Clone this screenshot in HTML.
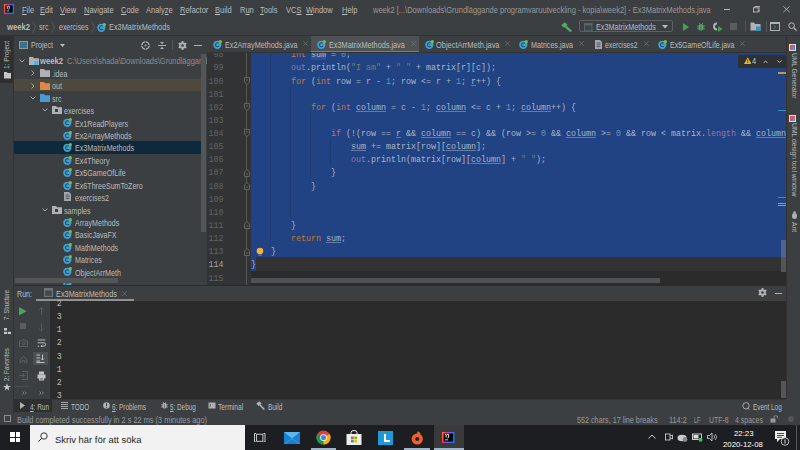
<!DOCTYPE html>
<html><head><meta charset="utf-8"><style>
html,body{margin:0;padding:0;width:800px;height:450px;overflow:hidden;background:#3c3f41}
body{position:relative}
body>div,body>svg{position:absolute;white-space:pre}
</style></head><body>
<div style="left:0px;top:0px;width:800px;height:450px;background:#3c3f41;"></div>
<div style="left:0px;top:0px;width:800px;height:17px;background:#3c3f41;"></div>
<div style="left:0px;top:17px;width:800px;height:18.5px;background:#3c3f41;"></div>
<div style="left:0px;top:35px;width:800px;height:1px;background:#323232;"></div>
<svg style="left:4.4px;top:3.6px" width="10" height="10" viewBox="0 0 10 10"><defs><linearGradient id="ijg" x1="0" y1="0" x2="1" y2="0.3"><stop offset="0" stop-color="#fe7d30"/><stop offset="0.3" stop-color="#fe315d"/><stop offset="0.65" stop-color="#6b57f7"/><stop offset="1" stop-color="#087cfa"/></linearGradient></defs><rect width="10" height="10" fill="url(#ijg)"/><rect x="1.4" y="1.3" width="7.3" height="7.3" fill="#000"/><path d="M2.5 2.2H3.3V5M4 2.2H5.3V4.6Q5.3 5.3 4.4 5.3" stroke="#fff" stroke-width="0.8" fill="none"/><rect x="2.5" y="6.6" width="2.6" height="0.7" fill="#fff"/></svg>
<div style="left:22px;top:6.86px;font-size:8.2px;line-height:8.2px;color:#bbbbbb;font-weight:normal;font-family:'Liberation Sans',sans-serif;transform-origin:0 0;transform:scaleX(0.915);"><span style="text-decoration:underline;text-decoration-thickness:0.7px;text-underline-offset:1px">F</span>ile</div>
<div style="left:40px;top:6.86px;font-size:8.2px;line-height:8.2px;color:#bbbbbb;font-weight:normal;font-family:'Liberation Sans',sans-serif;transform-origin:0 0;transform:scaleX(0.915);"><span style="text-decoration:underline;text-decoration-thickness:0.7px;text-underline-offset:1px">E</span>dit</div>
<div style="left:60px;top:6.86px;font-size:8.2px;line-height:8.2px;color:#bbbbbb;font-weight:normal;font-family:'Liberation Sans',sans-serif;transform-origin:0 0;transform:scaleX(0.915);"><span style="text-decoration:underline;text-decoration-thickness:0.7px;text-underline-offset:1px">V</span>iew</div>
<div style="left:84px;top:6.86px;font-size:8.2px;line-height:8.2px;color:#bbbbbb;font-weight:normal;font-family:'Liberation Sans',sans-serif;transform-origin:0 0;transform:scaleX(0.915);"><span style="text-decoration:underline;text-decoration-thickness:0.7px;text-underline-offset:1px">N</span>avigate</div>
<div style="left:121px;top:6.86px;font-size:8.2px;line-height:8.2px;color:#bbbbbb;font-weight:normal;font-family:'Liberation Sans',sans-serif;transform-origin:0 0;transform:scaleX(0.915);"><span style="text-decoration:underline;text-decoration-thickness:0.7px;text-underline-offset:1px">C</span>ode</div>
<div style="left:146px;top:6.86px;font-size:8.2px;line-height:8.2px;color:#bbbbbb;font-weight:normal;font-family:'Liberation Sans',sans-serif;transform-origin:0 0;transform:scaleX(0.915);">Analy<span style="text-decoration:underline;text-decoration-thickness:0.7px;text-underline-offset:1px">z</span>e</div>
<div style="left:179.5px;top:6.86px;font-size:8.2px;line-height:8.2px;color:#bbbbbb;font-weight:normal;font-family:'Liberation Sans',sans-serif;transform-origin:0 0;transform:scaleX(0.915);"><span style="text-decoration:underline;text-decoration-thickness:0.7px;text-underline-offset:1px">R</span>efactor</div>
<div style="left:215px;top:6.86px;font-size:8.2px;line-height:8.2px;color:#bbbbbb;font-weight:normal;font-family:'Liberation Sans',sans-serif;transform-origin:0 0;transform:scaleX(0.915);"><span style="text-decoration:underline;text-decoration-thickness:0.7px;text-underline-offset:1px">B</span>uild</div>
<div style="left:240px;top:6.86px;font-size:8.2px;line-height:8.2px;color:#bbbbbb;font-weight:normal;font-family:'Liberation Sans',sans-serif;transform-origin:0 0;transform:scaleX(0.915);">R<span style="text-decoration:underline;text-decoration-thickness:0.7px;text-underline-offset:1px">u</span>n</div>
<div style="left:260px;top:6.86px;font-size:8.2px;line-height:8.2px;color:#bbbbbb;font-weight:normal;font-family:'Liberation Sans',sans-serif;transform-origin:0 0;transform:scaleX(0.915);"><span style="text-decoration:underline;text-decoration-thickness:0.7px;text-underline-offset:1px">T</span>ools</div>
<div style="left:286px;top:6.86px;font-size:8.2px;line-height:8.2px;color:#bbbbbb;font-weight:normal;font-family:'Liberation Sans',sans-serif;transform-origin:0 0;transform:scaleX(0.915);">VC<span style="text-decoration:underline;text-decoration-thickness:0.7px;text-underline-offset:1px">S</span></div>
<div style="left:306px;top:6.86px;font-size:8.2px;line-height:8.2px;color:#bbbbbb;font-weight:normal;font-family:'Liberation Sans',sans-serif;transform-origin:0 0;transform:scaleX(0.915);"><span style="text-decoration:underline;text-decoration-thickness:0.7px;text-underline-offset:1px">W</span>indow</div>
<div style="left:342px;top:6.86px;font-size:8.2px;line-height:8.2px;color:#bbbbbb;font-weight:normal;font-family:'Liberation Sans',sans-serif;transform-origin:0 0;transform:scaleX(0.915);"><span style="text-decoration:underline;text-decoration-thickness:0.7px;text-underline-offset:1px">H</span>elp</div>
<div style="left:372.5px;top:6.86px;font-size:8.2px;line-height:8.2px;color:#999999;font-weight:normal;font-family:'Liberation Sans',sans-serif;transform-origin:0 0;transform:scaleX(0.915);">week2 [...\Downloads\Grundläggande programvaruutveckling - kopia\week2] - Ex3MatrixMethods.java</div>
<div style="left:723.5px;top:8.8px;width:6.5px;height:0.9px;background:#bbbbbb;"></div>
<svg style="left:752.5px;top:6px" width="7.5" height="6.5" viewBox="0 0 7.5 6.5"><rect x="0.5" y="1.8" width="4.7" height="4.2" fill="none" stroke="#bbbbbb" stroke-width="0.9"/><path d="M1.8 1.8V0.5H7V5H5.2" fill="none" stroke="#bbbbbb" stroke-width="0.9"/></svg>
<svg style="left:782.5px;top:6px" width="7" height="6.5" viewBox="0 0 7 6.5"><path d="M0.3 0.3L6.7 6.2M6.7 0.3L0.3 6.2" stroke="#bbbbbb" stroke-width="0.8"/></svg>
<div style="left:7px;top:23.86px;font-size:8.2px;line-height:8.2px;color:#bbbbbb;font-weight:bold;font-family:'Liberation Sans',sans-serif;transform-origin:0 0;transform:scaleX(0.9352);">week2</div>
<svg style="left:32px;top:21px" width="4" height="12" viewBox="0 0 4 12"><path d="M0.5 0.5L3.5 6L0.5 11.5" stroke="#5e6060" stroke-width="0.8" fill="none"/></svg>
<div style="left:39px;top:24.06px;font-size:8.2px;line-height:8.2px;color:#bbbbbb;font-weight:normal;font-family:'Liberation Sans',sans-serif;transform-origin:0 0;transform:scaleX(0.8698);">src</div>
<svg style="left:51px;top:21px" width="4" height="12" viewBox="0 0 4 12"><path d="M0.5 0.5L3.5 6L0.5 11.5" stroke="#5e6060" stroke-width="0.8" fill="none"/></svg>
<div style="left:59px;top:24.06px;font-size:8.2px;line-height:8.2px;color:#bbbbbb;font-weight:normal;font-family:'Liberation Sans',sans-serif;transform-origin:0 0;transform:scaleX(0.8528);">exercises</div>
<svg style="left:91px;top:21px" width="4" height="12" viewBox="0 0 4 12"><path d="M0.5 0.5L3.5 6L0.5 11.5" stroke="#5e6060" stroke-width="0.8" fill="none"/></svg>
<svg style="left:97px;top:22.5px" width="9" height="9" viewBox="0 0 10 10"><circle cx="4.8" cy="5.3" r="4.6" fill="#44a0cf"/><path d="M6.6 3.8A2.2 2.2 0 1 0 6.6 6.8" stroke="#1d4f6b" stroke-width="1.2" fill="none"/><circle cx="8.1" cy="1.9" r="1.9" fill="#6cc04a"/></svg>
<div style="left:108.5px;top:24.06px;font-size:8.2px;line-height:8.2px;color:#bbbbbb;font-weight:normal;font-family:'Liberation Sans',sans-serif;transform-origin:0 0;transform:scaleX(0.8995);">Ex3MatrixMethods</div>
<svg style="left:561px;top:22px" width="11" height="10" viewBox="0 0 11 10"><path d="M0.3 3.2L3.8 0.3L6.6 2.8L3.2 5.8Z" fill="#59a869"/><path d="M4.6 4.4L10.2 9.6" stroke="#59a869" stroke-width="2.2"/></svg>
<div style="left:578.5px;top:20px;width:94px;height:12px;border:1px solid #5e6060;border-radius:2px;box-sizing:border-box;background:#3c3f41"></div>
<svg style="left:584px;top:22.5px" width="8.5" height="8.5" viewBox="0 0 9 9"><rect x="0" y="0" width="9" height="9" fill="#59656b"/><rect x="1.2" y="2.6" width="6.6" height="5.2" fill="#3d4548"/></svg>
<div style="left:596.4px;top:24.06px;font-size:8.2px;line-height:8.2px;color:#bbbbbb;font-weight:normal;font-family:'Liberation Sans',sans-serif;transform-origin:0 0;transform:scaleX(0.8848);">Ex3MatrixMethods</div>
<svg style="left:662px;top:24.5px" width="6" height="4" viewBox="0 0 6 4"><path d="M0 0L6 0L3 3.5Z" fill="#bbbbbb"/></svg>
<svg style="left:682.5px;top:22.5px" width="6" height="8" viewBox="0 0 6 8"><path d="M0 0L6 4L0 8Z" fill="#499c54"/></svg>
<svg style="left:697px;top:22.3px" width="8" height="9" viewBox="0 0 8 9"><path d="M2.2 1L3 2.3M5.8 1L5 2.3" stroke="#59a869" stroke-width="0.8"/><rect x="1.5" y="2.2" width="5" height="6.3" rx="2" fill="#59a869"/><path d="M0 4.2H1.5M6.5 4.2H8M0 6.8H1.5M6.5 6.8H8" stroke="#59a869" stroke-width="0.8"/><path d="M4 3.5V8" stroke="#3c3f41" stroke-width="0.6"/></svg>
<svg style="left:713px;top:21.5px" width="10" height="10" viewBox="0 0 10 10"><path d="M4 0.5A4 4 0 1 0 4 8.5L4 6.5A2 2 0 1 1 4 2.5Z" fill="#afb1b3"/><path d="M5 4L9.5 7L5 10Z" fill="#499c54"/></svg>
<div style="left:730px;top:23px;width:7px;height:7px;background:#5a5d5f;"></div>
<div style="left:745px;top:21px;width:0.8px;height:11px;background:#515658;"></div>
<svg style="left:750px;top:22px" width="11" height="9" viewBox="0 0 11 9"><path d="M0.5 0.5H4L5 2H10.5V8.5H0.5Z" fill="#afb1b3"/><rect x="6" y="4.5" width="4.5" height="4.5" fill="#3592c4"/></svg>
<div style="left:766px;top:21px;width:0.8px;height:11px;background:#515658;"></div>
<div style="left:770px;top:22px;width:10px;height:9px;border:1px solid #afb1b3;box-sizing:border-box;border-top-width:2px"></div>
<svg style="left:773px;top:25px" width="4" height="4" viewBox="0 0 4 4"><path d="M0.5 0.5L2.5 2L0.5 3.5" stroke="#499c54" stroke-width="0.8" fill="none"/></svg>
<svg style="left:788px;top:22px" width="9" height="9" viewBox="0 0 9 9"><circle cx="3.6" cy="3.6" r="2.8" stroke="#bbbbbb" stroke-width="1" fill="none"/><path d="M5.6 5.6L8.5 8.5" stroke="#bbbbbb" stroke-width="1.2"/></svg>
<div style="left:0px;top:36px;width:13px;height:377px;background:#3c3f41;"></div>
<div style="left:0px;top:36px;width:13px;height:47px;background:#2d2f31;"></div>
<div style="left:13px;top:36px;width:0.8px;height:377px;background:#323232;"></div>
<div style="left:3px;top:69px;transform-origin:0 0;transform:rotate(-90deg) scaleX(0.8836);font-size:7.5px;line-height:7.5px;color:#bbbbbb;font-family:'Liberation Sans',sans-serif">1: Project</div>
<svg style="left:4px;top:72px" width="7" height="6.5" viewBox="0 0 7 6.5"><path d="M0 0H2.8L3.6 1H7V6.5H0Z" fill="#c4c6c8"/></svg>
<div style="left:3px;top:320px;transform-origin:0 0;transform:rotate(-90deg) scaleX(0.7736);font-size:7.5px;line-height:7.5px;color:#bbbbbb;font-family:'Liberation Sans',sans-serif">7: Structure</div>
<svg style="left:4px;top:327.5px" width="7" height="6.5" viewBox="0 0 7 6.5"><rect x="0" y="0" width="3" height="2.5" fill="#c4c6c8"/><rect x="0" y="3.8" width="3" height="2.7" fill="#c4c6c8"/><rect x="3.8" y="3.8" width="3.2" height="2.7" fill="#c4c6c8"/></svg>
<div style="left:3px;top:380.5px;transform-origin:0 0;transform:rotate(-90deg) scaleX(0.8421);font-size:7.5px;line-height:7.5px;color:#bbbbbb;font-family:'Liberation Sans',sans-serif">2: Favorites</div>
<svg style="left:3px;top:383px" width="8" height="8" viewBox="0 0 10 10"><path d="M5 0.3L6.2 3.7H9.8L6.9 5.9L8 9.5L5 7.3L2 9.5L3.1 5.9L0.2 3.7H3.8Z" fill="#c4c6c8"/></svg>
<div style="left:13.8px;top:36px;width:193px;height:249px;background:#3c3f41;"></div>
<div style="left:19px;top:41px;width:9px;height:8px;background:#3a7190;border:1.3px solid #8d999e;box-sizing:border-box"></div>
<div style="left:31px;top:42.36px;font-size:8.2px;line-height:8.2px;color:#bbbbbb;font-weight:normal;font-family:'Liberation Sans',sans-serif;transform-origin:0 0;transform:scaleX(0.8633);">Project</div>
<svg style="left:60px;top:44px" width="5" height="3.5" viewBox="0 0 6 4"><path d="M0 0L6 0L3 3.5Z" fill="#bbbbbb"/></svg>
<svg style="left:140.5px;top:40.5px" width="9" height="9" viewBox="0 0 9 9"><circle cx="4.5" cy="4.5" r="3.6" stroke="#afb1b3" stroke-width="1.4" fill="none"/><path d="M4.5 0.5V3M4.5 6V8.5M0.5 4.5H3M6 4.5H8.5" stroke="#3c3f41" stroke-width="0.9"/><circle cx="4.5" cy="4.5" r="0.9" fill="#afb1b3"/></svg>
<svg style="left:157.5px;top:40.5px" width="8" height="9" viewBox="0 0 8 9"><path d="M0 4.5H8" stroke="#afb1b3" stroke-width="1"/><path d="M2 1H6L4 3.2Z M2 8H6L4 5.8Z" fill="#afb1b3"/></svg>
<div style="left:171.5px;top:40px;width:0.8px;height:10px;background:#515658;"></div>
<svg style="left:177.5px;top:40.5px" width="9" height="9" viewBox="0 0 9 9"><polygon points="3.61,1.63 3.61,0.09 5.39,0.09 5.39,1.63 6.54,2.30 7.87,1.52 8.77,3.07 7.43,3.83 7.43,5.17 8.77,5.93 7.87,7.48 6.54,6.70 5.39,7.37 5.39,8.91 3.61,8.91 3.61,7.37 2.46,6.70 1.13,7.48 0.23,5.93 1.57,5.17 1.57,3.83 0.23,3.07 1.13,1.52 2.46,2.30" fill="#afb1b3"/><circle cx="4.5" cy="4.5" r="3.2" fill="#afb1b3"/><circle cx="4.5" cy="4.5" r="1.3" fill="#3c3f41"/></svg>
<div style="left:194px;top:44.5px;width:8px;height:1px;background:#afb1b3;"></div>
<div style="left:13.8px;top:78.5px;width:187px;height:12.4px;background:#4d493d;"></div>
<div style="left:13.8px;top:141.2px;width:187px;height:12.4px;background:#0d293e;"></div>
<svg style="left:18.5px;top:58.8px" width="6" height="4" viewBox="0 0 6 4"><path d="M0.5 0.5L3 3L5.5 0.5" stroke="#afb1b3" stroke-width="0.9" fill="none"/></svg>
<svg style="left:28.7px;top:56.8px" width="10" height="8" viewBox="0 0 10 8"><path d="M0 0H4L5 1.2H10V8H0Z" fill="#afb1b3"/></svg>
<div style="left:33.7px;top:61.3px;width:4px;height:4px;background:#40b6e0;"></div>
<div style="left:40.3px;top:58.46px;font-size:8.2px;line-height:8.2px;color:#bbbbbb;font-weight:bold;font-family:'Liberation Sans',sans-serif;transform-origin:0 0;transform:scaleX(0.9352);">week2</div>
<svg style="left:31.0px;top:70.22px" width="4" height="6" viewBox="0 0 4 6"><path d="M0.5 0.5L3 3L0.5 5.5" stroke="#afb1b3" stroke-width="0.9" fill="none"/></svg>
<svg style="left:40.2px;top:69.22px" width="10" height="8" viewBox="0 0 10 8"><path d="M0 0H4L5 1.2H10V8H0Z" fill="#afb1b3"/></svg>
<div style="left:52px;top:70.88px;font-size:8.2px;line-height:8.2px;color:#bbbbbb;font-weight:normal;font-family:'Liberation Sans',sans-serif;transform-origin:0 0;transform:scaleX(0.87);">.idea</div>
<svg style="left:31.0px;top:82.64px" width="4" height="6" viewBox="0 0 4 6"><path d="M0.5 0.5L3 3L0.5 5.5" stroke="#afb1b3" stroke-width="0.9" fill="none"/></svg>
<svg style="left:40.2px;top:81.64px" width="10" height="8" viewBox="0 0 10 8"><path d="M0 0H4L5 1.2H10V8H0Z" fill="#e08646"/></svg>
<div style="left:52px;top:83.30px;font-size:8.2px;line-height:8.2px;color:#bbbbbb;font-weight:normal;font-family:'Liberation Sans',sans-serif;transform-origin:0 0;transform:scaleX(0.87);">out</div>
<svg style="left:30.0px;top:96.06px" width="6" height="4" viewBox="0 0 6 4"><path d="M0.5 0.5L3 3L5.5 0.5" stroke="#afb1b3" stroke-width="0.9" fill="none"/></svg>
<svg style="left:40.2px;top:94.06px" width="10" height="8" viewBox="0 0 10 8"><path d="M0 0H4L5 1.2H10V8H0Z" fill="#4b9ad0"/></svg>
<div style="left:52px;top:95.72px;font-size:8.2px;line-height:8.2px;color:#bbbbbb;font-weight:normal;font-family:'Liberation Sans',sans-serif;transform-origin:0 0;transform:scaleX(0.87);">src</div>
<svg style="left:41.5px;top:108.47999999999999px" width="6" height="4" viewBox="0 0 6 4"><path d="M0.5 0.5L3 3L5.5 0.5" stroke="#afb1b3" stroke-width="0.9" fill="none"/></svg>
<svg style="left:51.7px;top:106.47999999999999px" width="10" height="8" viewBox="0 0 10 8"><path d="M0 0H4L5 1.2H10V8H0Z" fill="#afb1b3"/></svg>
<div style="left:55.2px;top:109.47999999999999px;width:3px;height:3px;background:#3c3f41;"></div>
<div style="left:63.6px;top:108.14px;font-size:8.2px;line-height:8.2px;color:#bbbbbb;font-weight:normal;font-family:'Liberation Sans',sans-serif;transform-origin:0 0;transform:scaleX(0.87);">exercises</div>
<svg style="left:63.2px;top:118.4px" width="9" height="9" viewBox="0 0 10 10"><circle cx="4.8" cy="5.3" r="4.6" fill="#44a0cf"/><path d="M6.6 3.8A2.2 2.2 0 1 0 6.6 6.8" stroke="#1d4f6b" stroke-width="1.2" fill="none"/><circle cx="8.1" cy="1.9" r="1.9" fill="#6cc04a"/></svg>
<div style="left:74.5px;top:120.56px;font-size:8.2px;line-height:8.2px;color:#bbbbbb;font-weight:normal;font-family:'Liberation Sans',sans-serif;transform-origin:0 0;transform:scaleX(0.87);">Ex1ReadPlayers</div>
<svg style="left:63.2px;top:130.82px" width="9" height="9" viewBox="0 0 10 10"><circle cx="4.8" cy="5.3" r="4.6" fill="#44a0cf"/><path d="M6.6 3.8A2.2 2.2 0 1 0 6.6 6.8" stroke="#1d4f6b" stroke-width="1.2" fill="none"/><circle cx="8.1" cy="1.9" r="1.9" fill="#6cc04a"/></svg>
<div style="left:74.5px;top:132.98px;font-size:8.2px;line-height:8.2px;color:#bbbbbb;font-weight:normal;font-family:'Liberation Sans',sans-serif;transform-origin:0 0;transform:scaleX(0.87);">Ex2ArrayMethods</div>
<svg style="left:63.2px;top:143.24px" width="9" height="9" viewBox="0 0 10 10"><circle cx="4.8" cy="5.3" r="4.6" fill="#44a0cf"/><path d="M6.6 3.8A2.2 2.2 0 1 0 6.6 6.8" stroke="#1d4f6b" stroke-width="1.2" fill="none"/><circle cx="8.1" cy="1.9" r="1.9" fill="#6cc04a"/></svg>
<div style="left:74.5px;top:145.40px;font-size:8.2px;line-height:8.2px;color:#bbbbbb;font-weight:normal;font-family:'Liberation Sans',sans-serif;transform-origin:0 0;transform:scaleX(0.87);">Ex3MatrixMethods</div>
<svg style="left:63.2px;top:155.66px" width="9" height="9" viewBox="0 0 10 10"><circle cx="4.8" cy="5.3" r="4.6" fill="#44a0cf"/><path d="M6.6 3.8A2.2 2.2 0 1 0 6.6 6.8" stroke="#1d4f6b" stroke-width="1.2" fill="none"/><circle cx="8.1" cy="1.9" r="1.9" fill="#6cc04a"/></svg>
<div style="left:74.5px;top:157.82px;font-size:8.2px;line-height:8.2px;color:#bbbbbb;font-weight:normal;font-family:'Liberation Sans',sans-serif;transform-origin:0 0;transform:scaleX(0.87);">Ex4Theory</div>
<svg style="left:63.2px;top:168.07999999999998px" width="9" height="9" viewBox="0 0 10 10"><circle cx="4.8" cy="5.3" r="4.6" fill="#44a0cf"/><path d="M6.6 3.8A2.2 2.2 0 1 0 6.6 6.8" stroke="#1d4f6b" stroke-width="1.2" fill="none"/><circle cx="8.1" cy="1.9" r="1.9" fill="#6cc04a"/></svg>
<div style="left:74.5px;top:170.24px;font-size:8.2px;line-height:8.2px;color:#bbbbbb;font-weight:normal;font-family:'Liberation Sans',sans-serif;transform-origin:0 0;transform:scaleX(0.87);">Ex5GameOfLife</div>
<svg style="left:63.2px;top:180.5px" width="9" height="9" viewBox="0 0 10 10"><circle cx="4.8" cy="5.3" r="4.6" fill="#44a0cf"/><path d="M6.6 3.8A2.2 2.2 0 1 0 6.6 6.8" stroke="#1d4f6b" stroke-width="1.2" fill="none"/><circle cx="8.1" cy="1.9" r="1.9" fill="#6cc04a"/></svg>
<div style="left:74.5px;top:182.66px;font-size:8.2px;line-height:8.2px;color:#bbbbbb;font-weight:normal;font-family:'Liberation Sans',sans-serif;transform-origin:0 0;transform:scaleX(0.87);">Ex6ThreeSumToZero</div>
<svg style="left:64.2px;top:192.42000000000002px" width="7" height="9" viewBox="0 0 7 9"><path d="M0 0H5L7 2V9H0Z" fill="#9ea7ad"/><path d="M1.5 3H5.5M1.5 4.8H5.5M1.5 6.6H5.5" stroke="#3c3f41" stroke-width="0.7"/></svg>
<div style="left:74.5px;top:195.08px;font-size:8.2px;line-height:8.2px;color:#bbbbbb;font-weight:normal;font-family:'Liberation Sans',sans-serif;transform-origin:0 0;transform:scaleX(0.87);">exercises2</div>
<svg style="left:41.5px;top:207.83999999999997px" width="6" height="4" viewBox="0 0 6 4"><path d="M0.5 0.5L3 3L5.5 0.5" stroke="#afb1b3" stroke-width="0.9" fill="none"/></svg>
<svg style="left:51.7px;top:205.83999999999997px" width="10" height="8" viewBox="0 0 10 8"><path d="M0 0H4L5 1.2H10V8H0Z" fill="#afb1b3"/></svg>
<div style="left:55.2px;top:208.83999999999997px;width:3px;height:3px;background:#3c3f41;"></div>
<div style="left:63.6px;top:207.50px;font-size:8.2px;line-height:8.2px;color:#bbbbbb;font-weight:normal;font-family:'Liberation Sans',sans-serif;transform-origin:0 0;transform:scaleX(0.87);">samples</div>
<svg style="left:63.2px;top:217.76px" width="9" height="9" viewBox="0 0 10 10"><circle cx="4.8" cy="5.3" r="4.6" fill="#44a0cf"/><path d="M6.6 3.8A2.2 2.2 0 1 0 6.6 6.8" stroke="#1d4f6b" stroke-width="1.2" fill="none"/><circle cx="8.1" cy="1.9" r="1.9" fill="#6cc04a"/></svg>
<div style="left:74.5px;top:219.92px;font-size:8.2px;line-height:8.2px;color:#bbbbbb;font-weight:normal;font-family:'Liberation Sans',sans-serif;transform-origin:0 0;transform:scaleX(0.87);">ArrayMethods</div>
<svg style="left:63.2px;top:230.18px" width="9" height="9" viewBox="0 0 10 10"><circle cx="4.8" cy="5.3" r="4.6" fill="#44a0cf"/><path d="M6.6 3.8A2.2 2.2 0 1 0 6.6 6.8" stroke="#1d4f6b" stroke-width="1.2" fill="none"/><circle cx="8.1" cy="1.9" r="1.9" fill="#6cc04a"/></svg>
<div style="left:74.5px;top:232.34px;font-size:8.2px;line-height:8.2px;color:#bbbbbb;font-weight:normal;font-family:'Liberation Sans',sans-serif;transform-origin:0 0;transform:scaleX(0.87);">BasicJavaFX</div>
<svg style="left:63.2px;top:242.60000000000002px" width="9" height="9" viewBox="0 0 10 10"><circle cx="4.8" cy="5.3" r="4.6" fill="#44a0cf"/><path d="M6.6 3.8A2.2 2.2 0 1 0 6.6 6.8" stroke="#1d4f6b" stroke-width="1.2" fill="none"/><circle cx="8.1" cy="1.9" r="1.9" fill="#6cc04a"/></svg>
<div style="left:74.5px;top:244.76px;font-size:8.2px;line-height:8.2px;color:#bbbbbb;font-weight:normal;font-family:'Liberation Sans',sans-serif;transform-origin:0 0;transform:scaleX(0.87);">MathMethods</div>
<svg style="left:63.2px;top:255.01999999999998px" width="9" height="9" viewBox="0 0 10 10"><circle cx="4.8" cy="5.3" r="4.6" fill="#44a0cf"/><path d="M6.6 3.8A2.2 2.2 0 1 0 6.6 6.8" stroke="#1d4f6b" stroke-width="1.2" fill="none"/><circle cx="8.1" cy="1.9" r="1.9" fill="#6cc04a"/></svg>
<div style="left:74.5px;top:257.18px;font-size:8.2px;line-height:8.2px;color:#bbbbbb;font-weight:normal;font-family:'Liberation Sans',sans-serif;transform-origin:0 0;transform:scaleX(0.87);">Matrices</div>
<svg style="left:63.2px;top:267.44px" width="9" height="9" viewBox="0 0 10 10"><circle cx="4.8" cy="5.3" r="4.6" fill="#44a0cf"/><path d="M6.6 3.8A2.2 2.2 0 1 0 6.6 6.8" stroke="#1d4f6b" stroke-width="1.2" fill="none"/><circle cx="8.1" cy="1.9" r="1.9" fill="#6cc04a"/></svg>
<div style="left:74.5px;top:269.60px;font-size:8.2px;line-height:8.2px;color:#bbbbbb;font-weight:normal;font-family:'Liberation Sans',sans-serif;transform-origin:0 0;transform:scaleX(0.87);">ObjectArrMeth</div>
<svg style="left:63.2px;top:279.86px" width="9" height="9" viewBox="0 0 10 10"><circle cx="4.8" cy="5.3" r="4.6" fill="#44a0cf"/><path d="M6.6 3.8A2.2 2.2 0 1 0 6.6 6.8" stroke="#1d4f6b" stroke-width="1.2" fill="none"/><circle cx="8.1" cy="1.9" r="1.9" fill="#6cc04a"/></svg>
<div style="left:67px;top:58.46px;font-size:8.2px;line-height:8.2px;color:#8c8c8c;font-weight:normal;font-family:'Liberation Sans',sans-serif;transform-origin:0 0;transform:scaleX(0.915);">C:\Users\shada\Downloads\Grundläggande</div>
<div style="left:200.7px;top:53.5px;width:5px;height:178px;background:#535557;"></div>
<div style="left:15px;top:278px;width:103px;height:5px;background:#535557;"></div>
<div style="left:206.5px;top:52.5px;width:44.5px;height:232px;background:#313335;"></div>
<div style="left:251px;top:52.5px;width:535px;height:232px;background:#2b2b2b;"></div>
<div style="left:251px;top:52.5px;width:535px;height:204.88500000000005px;background:#214283;"></div>
<div style="left:251px;top:257.38500000000005px;width:535px;height:13.13px;background:#323232;"></div>
<div style="left:251px;top:257.38500000000005px;width:5px;height:13.13px;background:#214283;"></div>
<div style="left:269.5px;top:47.305px;width:0.8px;height:196.95000000000002px;background:#1d3a73;"></div>
<div style="left:289.5px;top:86.69500000000001px;width:0.8px;height:131.3px;background:#1d3a73;"></div>
<div style="left:309.5px;top:112.95500000000001px;width:0.8px;height:65.65px;background:#1d3a73;"></div>
<div style="left:329.5px;top:139.215px;width:0.8px;height:26.26px;background:#1d3a73;"></div>
<div style="left:213.5px;top:51.29px;font-size:8.33px;line-height:8.33px;color:#606366;font-weight:normal;font-family:'Liberation Mono',monospace;">98</div>
<div style="left:213.5px;top:64.42px;font-size:8.33px;line-height:8.33px;color:#606366;font-weight:normal;font-family:'Liberation Mono',monospace;">99</div>
<div style="left:208.5px;top:77.55px;font-size:8.33px;line-height:8.33px;color:#606366;font-weight:normal;font-family:'Liberation Mono',monospace;">100</div>
<div style="left:208.5px;top:90.68px;font-size:8.33px;line-height:8.33px;color:#606366;font-weight:normal;font-family:'Liberation Mono',monospace;">101</div>
<div style="left:208.5px;top:103.81px;font-size:8.33px;line-height:8.33px;color:#606366;font-weight:normal;font-family:'Liberation Mono',monospace;">102</div>
<div style="left:208.5px;top:116.94px;font-size:8.33px;line-height:8.33px;color:#606366;font-weight:normal;font-family:'Liberation Mono',monospace;">103</div>
<div style="left:208.5px;top:130.07px;font-size:8.33px;line-height:8.33px;color:#606366;font-weight:normal;font-family:'Liberation Mono',monospace;">104</div>
<div style="left:208.5px;top:143.20px;font-size:8.33px;line-height:8.33px;color:#606366;font-weight:normal;font-family:'Liberation Mono',monospace;">105</div>
<div style="left:208.5px;top:156.33px;font-size:8.33px;line-height:8.33px;color:#606366;font-weight:normal;font-family:'Liberation Mono',monospace;">106</div>
<div style="left:208.5px;top:169.46px;font-size:8.33px;line-height:8.33px;color:#606366;font-weight:normal;font-family:'Liberation Mono',monospace;">107</div>
<div style="left:208.5px;top:182.59px;font-size:8.33px;line-height:8.33px;color:#606366;font-weight:normal;font-family:'Liberation Mono',monospace;">108</div>
<div style="left:208.5px;top:195.72px;font-size:8.33px;line-height:8.33px;color:#606366;font-weight:normal;font-family:'Liberation Mono',monospace;">109</div>
<div style="left:208.5px;top:208.85px;font-size:8.33px;line-height:8.33px;color:#606366;font-weight:normal;font-family:'Liberation Mono',monospace;">110</div>
<div style="left:208.5px;top:221.98px;font-size:8.33px;line-height:8.33px;color:#606366;font-weight:normal;font-family:'Liberation Mono',monospace;">111</div>
<div style="left:208.5px;top:235.11px;font-size:8.33px;line-height:8.33px;color:#606366;font-weight:normal;font-family:'Liberation Mono',monospace;">112</div>
<div style="left:208.5px;top:248.24px;font-size:8.33px;line-height:8.33px;color:#606366;font-weight:normal;font-family:'Liberation Mono',monospace;">113</div>
<div style="left:208.5px;top:261.37px;font-size:8.33px;line-height:8.33px;color:#a4a3a3;font-weight:normal;font-family:'Liberation Mono',monospace;">114</div>
<div style="left:208.5px;top:274.50px;font-size:8.33px;line-height:8.33px;color:#606366;font-weight:normal;font-family:'Liberation Mono',monospace;">115</div>
<div style="left:246.3px;top:52.5px;width:0.8px;height:232px;background:#555555;"></div>
<svg style="left:243.5px;top:76.83px" width="6" height="8" viewBox="0 0 6 8"><path d="M0.5 0.5H5.5V5L3 7.5L0.5 5Z" fill="#313335" stroke="#6e6e6e" stroke-width="0.8"/><path d="M1.8 3H4.2" stroke="#6e6e6e" stroke-width="0.8"/></svg>
<svg style="left:243.5px;top:103.09px" width="6" height="8" viewBox="0 0 6 8"><path d="M0.5 0.5H5.5V5L3 7.5L0.5 5Z" fill="#313335" stroke="#6e6e6e" stroke-width="0.8"/><path d="M1.8 3H4.2" stroke="#6e6e6e" stroke-width="0.8"/></svg>
<svg style="left:243.5px;top:129.35px" width="6" height="8" viewBox="0 0 6 8"><path d="M0.5 0.5H5.5V5L3 7.5L0.5 5Z" fill="#313335" stroke="#6e6e6e" stroke-width="0.8"/><path d="M1.8 3H4.2" stroke="#6e6e6e" stroke-width="0.8"/></svg>
<svg style="left:243.5px;top:168.74px" width="6" height="8" viewBox="0 0 6 8"><path d="M0.5 7.5H5.5V3L3 0.5L0.5 3Z" fill="#313335" stroke="#6e6e6e" stroke-width="0.8"/><path d="M1.8 5H4.2" stroke="#6e6e6e" stroke-width="0.8"/></svg>
<svg style="left:243.5px;top:181.87px" width="6" height="8" viewBox="0 0 6 8"><path d="M0.5 7.5H5.5V3L3 0.5L0.5 3Z" fill="#313335" stroke="#6e6e6e" stroke-width="0.8"/><path d="M1.8 5H4.2" stroke="#6e6e6e" stroke-width="0.8"/></svg>
<svg style="left:243.5px;top:221.26px" width="6" height="8" viewBox="0 0 6 8"><path d="M0.5 7.5H5.5V3L3 0.5L0.5 3Z" fill="#313335" stroke="#6e6e6e" stroke-width="0.8"/><path d="M1.8 5H4.2" stroke="#6e6e6e" stroke-width="0.8"/></svg>
<svg style="left:243.5px;top:247.52px" width="6" height="8" viewBox="0 0 6 8"><path d="M0.5 7.5H5.5V3L3 0.5L0.5 3Z" fill="#313335" stroke="#6e6e6e" stroke-width="0.8"/><path d="M1.8 5H4.2" stroke="#6e6e6e" stroke-width="0.8"/></svg>
<div style="left:251px;top:51.29px;font-size:8.33px;line-height:8.33px;color:#a9b7c6;font-weight:normal;font-family:'Liberation Mono',monospace;white-space:pre"><span style="color:#a9b7c6;">        </span><span style="color:#cc7832;">int</span><span style="color:#a9b7c6;"> </span><span style="background:#2d5096;color:#a9b7c6">sum</span><span style="color:#a9b7c6;"> = </span><span style="color:#6897bb;">0</span><span style="color:#a9b7c6;">;</span></div>
<div style="left:251px;top:64.42px;font-size:8.33px;line-height:8.33px;color:#a9b7c6;font-weight:normal;font-family:'Liberation Mono',monospace;white-space:pre"><span style="color:#a9b7c6;">        </span><span style="color:#9876aa;">out</span><span style="color:#a9b7c6;">.println(</span><span style="color:#6a8759;">&quot;I am&quot;</span><span style="color:#a9b7c6;"> + </span><span style="color:#6a8759;">&quot; &quot;</span><span style="color:#a9b7c6;"> + matrix[r][c])</span><span style="color:#a9b7c6;">;</span></div>
<div style="left:251px;top:77.55px;font-size:8.33px;line-height:8.33px;color:#a9b7c6;font-weight:normal;font-family:'Liberation Mono',monospace;white-space:pre"><span style="color:#a9b7c6;">        </span><span style="color:#cc7832;">for</span><span style="color:#a9b7c6;"> (</span><span style="color:#cc7832;">int</span><span style="color:#a9b7c6;"> row = r - </span><span style="color:#6897bb;">1</span><span style="color:#a9b7c6;">;</span><span style="color:#a9b7c6;"> row &lt;= r + </span><span style="color:#6897bb;">1</span><span style="color:#a9b7c6;">;</span><span style="color:#a9b7c6;"> </span><span style="color:#a9b7c6;text-decoration:underline;text-decoration-thickness:0.6px;text-underline-offset:0.6px;text-decoration-color:rgba(169,183,198,0.5);">r</span><span style="color:#a9b7c6;">++) {</span></div>
<div style="left:251px;top:103.81px;font-size:8.33px;line-height:8.33px;color:#a9b7c6;font-weight:normal;font-family:'Liberation Mono',monospace;white-space:pre"><span style="color:#a9b7c6;">            </span><span style="color:#cc7832;">for</span><span style="color:#a9b7c6;"> (</span><span style="color:#cc7832;">int</span><span style="color:#a9b7c6;"> </span><span style="color:#a9b7c6;text-decoration:underline;text-decoration-thickness:0.6px;text-underline-offset:0.6px;text-decoration-color:rgba(169,183,198,0.5);">column</span><span style="color:#a9b7c6;"> = c - </span><span style="color:#6897bb;">1</span><span style="color:#a9b7c6;">;</span><span style="color:#a9b7c6;"> </span><span style="color:#a9b7c6;text-decoration:underline;text-decoration-thickness:0.6px;text-underline-offset:0.6px;text-decoration-color:rgba(169,183,198,0.5);">column</span><span style="color:#a9b7c6;"> &lt;= c + </span><span style="color:#6897bb;">1</span><span style="color:#a9b7c6;">;</span><span style="color:#a9b7c6;"> </span><span style="color:#a9b7c6;text-decoration:underline;text-decoration-thickness:0.6px;text-underline-offset:0.6px;text-decoration-color:rgba(169,183,198,0.5);">column</span><span style="color:#a9b7c6;">++) {</span></div>
<div style="left:251px;top:130.07px;font-size:8.33px;line-height:8.33px;color:#a9b7c6;font-weight:normal;font-family:'Liberation Mono',monospace;white-space:pre"><span style="color:#a9b7c6;">                </span><span style="color:#cc7832;">if</span><span style="color:#a9b7c6;"> (!(row == </span><span style="color:#a9b7c6;text-decoration:underline;text-decoration-thickness:0.6px;text-underline-offset:0.6px;text-decoration-color:rgba(169,183,198,0.5);">r</span><span style="color:#a9b7c6;"> &amp;&amp; </span><span style="color:#a9b7c6;text-decoration:underline;text-decoration-thickness:0.6px;text-underline-offset:0.6px;text-decoration-color:rgba(169,183,198,0.5);">column</span><span style="color:#a9b7c6;"> == c) &amp;&amp; (row &gt;= </span><span style="color:#6897bb;">0</span><span style="color:#a9b7c6;"> &amp;&amp; </span><span style="color:#a9b7c6;text-decoration:underline;text-decoration-thickness:0.6px;text-underline-offset:0.6px;text-decoration-color:rgba(169,183,198,0.5);">column</span><span style="color:#a9b7c6;"> &gt;= </span><span style="color:#6897bb;">0</span><span style="color:#a9b7c6;"> &amp;&amp; row &lt; matrix.</span><span style="color:#9876aa;">length</span><span style="color:#a9b7c6;"> &amp;&amp; </span><span style="color:#a9b7c6;text-decoration:underline;text-decoration-thickness:0.6px;text-underline-offset:0.6px;text-decoration-color:rgba(169,183,198,0.5);">column</span></div>
<div style="left:251px;top:143.20px;font-size:8.33px;line-height:8.33px;color:#a9b7c6;font-weight:normal;font-family:'Liberation Mono',monospace;white-space:pre"><span style="color:#a9b7c6;">                    </span><span style="color:#a9b7c6;text-decoration:underline;text-decoration-thickness:0.6px;text-underline-offset:0.6px;text-decoration-color:rgba(169,183,198,0.5);">sum</span><span style="color:#a9b7c6;"> += matrix[row][</span><span style="color:#a9b7c6;text-decoration:underline;text-decoration-thickness:0.6px;text-underline-offset:0.6px;text-decoration-color:rgba(169,183,198,0.5);">column</span><span style="color:#a9b7c6;">]</span><span style="color:#a9b7c6;">;</span></div>
<div style="left:251px;top:156.33px;font-size:8.33px;line-height:8.33px;color:#a9b7c6;font-weight:normal;font-family:'Liberation Mono',monospace;white-space:pre"><span style="color:#a9b7c6;">                    </span><span style="color:#9876aa;">out</span><span style="color:#a9b7c6;">.println(matrix[row][</span><span style="color:#a9b7c6;text-decoration:underline;text-decoration-thickness:0.6px;text-underline-offset:0.6px;text-decoration-color:rgba(169,183,198,0.5);">column</span><span style="color:#a9b7c6;">] + </span><span style="color:#6a8759;">&quot; &quot;</span><span style="color:#a9b7c6;">)</span><span style="color:#a9b7c6;">;</span></div>
<div style="left:251px;top:169.46px;font-size:8.33px;line-height:8.33px;color:#a9b7c6;font-weight:normal;font-family:'Liberation Mono',monospace;white-space:pre"><span style="color:#a9b7c6;">                }</span></div>
<div style="left:251px;top:182.59px;font-size:8.33px;line-height:8.33px;color:#a9b7c6;font-weight:normal;font-family:'Liberation Mono',monospace;white-space:pre"><span style="color:#a9b7c6;">            }</span></div>
<div style="left:251px;top:221.98px;font-size:8.33px;line-height:8.33px;color:#a9b7c6;font-weight:normal;font-family:'Liberation Mono',monospace;white-space:pre"><span style="color:#a9b7c6;">        }</span></div>
<div style="left:251px;top:235.11px;font-size:8.33px;line-height:8.33px;color:#a9b7c6;font-weight:normal;font-family:'Liberation Mono',monospace;white-space:pre"><span style="color:#a9b7c6;">        </span><span style="color:#cc7832;">return</span><span style="color:#a9b7c6;"> </span><span style="color:#a9b7c6;text-decoration:underline;text-decoration-thickness:0.6px;text-underline-offset:0.6px;text-decoration-color:rgba(169,183,198,0.5);">sum</span><span style="color:#a9b7c6;">;</span></div>
<div style="left:251px;top:248.24px;font-size:8.33px;line-height:8.33px;color:#a9b7c6;font-weight:normal;font-family:'Liberation Mono',monospace;white-space:pre"><span style="color:#a9b7c6;">    }</span></div>
<div style="left:251px;top:261.37px;font-size:8.33px;line-height:8.33px;color:#a9b7c6;font-weight:normal;font-family:'Liberation Mono',monospace;white-space:pre"><span style="color:#a9b7c6;">}</span></div>
<svg style="left:255.5px;top:246.62000000000003px" width="8" height="10" viewBox="0 0 8 10"><circle cx="4" cy="4" r="3.3" fill="#f4af3d"/><rect x="2.5" y="7" width="3" height="2" fill="#6e6e6e"/></svg>
<div style="left:737.5px;top:54.5px;width:48px;height:13px;background:#2e3032;border-radius:2px"></div>
<svg style="left:743.5px;top:57.3px" width="7.5" height="7.2" viewBox="0 0 8 7"><path d="M4 0L8 7H0Z" fill="#e0b83a"/><path d="M4 2.3V4.6M4 5.3V6.2" stroke="#4a3a10" stroke-width="1"/></svg>
<div style="left:752px;top:58.46px;font-size:8.2px;line-height:8.2px;color:#c8c8c8;font-weight:normal;font-family:'Liberation Sans',sans-serif;transform-origin:0 0;transform:scaleX(0.9);">4</div>
<svg style="left:763.3px;top:59.5px" width="5" height="3.5" viewBox="0 0 5 3.5"><path d="M0.4 3.1L2.5 1L4.6 3.1" stroke="#bbbbbb" stroke-width="1" fill="none"/></svg>
<svg style="left:776.7px;top:59.5px" width="5" height="3.5" viewBox="0 0 5 3.5"><path d="M0.4 0.4L2.5 2.5L4.6 0.4" stroke="#bbbbbb" stroke-width="1" fill="none"/></svg>
<div style="left:778px;top:72px;width:7.5px;height:1.5px;background:#bd9b3a;"></div>
<div style="left:778px;top:110px;width:7.5px;height:1.3px;background:#3a89c4;"></div>
<div style="left:778px;top:196.5px;width:7.5px;height:1.3px;background:#3a89c4;"></div>
<div style="left:778px;top:202.7px;width:7.5px;height:1px;background:#bd9b3a;"></div>
<div style="left:778px;top:204.5px;width:7.5px;height:1px;background:#bd9b3a;"></div>
<div style="left:781px;top:240px;width:4.5px;height:17px;background:rgba(160,160,170,0.35);"></div>
<div style="left:781px;top:257px;width:4.5px;height:15px;background:#535557;"></div>
<div style="left:251px;top:278px;width:409px;height:5px;background:#4f5153;"></div>
<div style="left:206.5px;top:36px;width:580px;height:16.5px;background:#3c3f41;"></div>
<svg style="left:213px;top:39.5px" width="9" height="9" viewBox="0 0 10 10"><circle cx="4.8" cy="5.3" r="4.6" fill="#44a0cf"/><path d="M6.6 3.8A2.2 2.2 0 1 0 6.6 6.8" stroke="#1d4f6b" stroke-width="1.2" fill="none"/><circle cx="8.1" cy="1.9" r="1.9" fill="#6cc04a"/></svg>
<div style="left:225px;top:41.66px;font-size:8.2px;line-height:8.2px;color:#bbbbbb;font-weight:normal;font-family:'Liberation Sans',sans-serif;transform-origin:0 0;transform:scaleX(0.8801);">Ex2ArrayMethods.java</div>
<svg style="left:302.5px;top:41px" width="5" height="5" viewBox="0 0 5 5"><path d="M0.3 0.3L4.7 4.7M4.7 0.3L0.3 4.7" stroke="#6e6e6e" stroke-width="0.8"/></svg>
<div style="left:311px;top:36px;width:108px;height:16.5px;background:#4e5254;"></div>
<div style="left:311px;top:50.5px;width:108px;height:2px;background:#4a88c7;"></div>
<svg style="left:316.5px;top:39.5px" width="9" height="9" viewBox="0 0 10 10"><circle cx="4.8" cy="5.3" r="4.6" fill="#44a0cf"/><path d="M6.6 3.8A2.2 2.2 0 1 0 6.6 6.8" stroke="#1d4f6b" stroke-width="1.2" fill="none"/><circle cx="8.1" cy="1.9" r="1.9" fill="#6cc04a"/></svg>
<div style="left:329px;top:41.66px;font-size:8.2px;line-height:8.2px;color:#bbbbbb;font-weight:normal;font-family:'Liberation Sans',sans-serif;transform-origin:0 0;transform:scaleX(0.8908);">Ex3MatrixMethods.java</div>
<svg style="left:410.5px;top:41px" width="5" height="5" viewBox="0 0 5 5"><path d="M0.3 0.3L4.7 4.7M4.7 0.3L0.3 4.7" stroke="#6e6e6e" stroke-width="0.8"/></svg>
<svg style="left:425px;top:39.5px" width="9" height="9" viewBox="0 0 10 10"><circle cx="4.8" cy="5.3" r="4.6" fill="#44a0cf"/><path d="M6.6 3.8A2.2 2.2 0 1 0 6.6 6.8" stroke="#1d4f6b" stroke-width="1.2" fill="none"/><circle cx="8.1" cy="1.9" r="1.9" fill="#6cc04a"/></svg>
<div style="left:436px;top:41.66px;font-size:8.2px;line-height:8.2px;color:#bbbbbb;font-weight:normal;font-family:'Liberation Sans',sans-serif;transform-origin:0 0;transform:scaleX(0.9061);">ObjectArrMeth.java</div>
<svg style="left:505px;top:41px" width="5" height="5" viewBox="0 0 5 5"><path d="M0.3 0.3L4.7 4.7M4.7 0.3L0.3 4.7" stroke="#6e6e6e" stroke-width="0.8"/></svg>
<svg style="left:519px;top:39.5px" width="9" height="9" viewBox="0 0 10 10"><circle cx="4.8" cy="5.3" r="4.6" fill="#44a0cf"/><path d="M6.6 3.8A2.2 2.2 0 1 0 6.6 6.8" stroke="#1d4f6b" stroke-width="1.2" fill="none"/><circle cx="8.1" cy="1.9" r="1.9" fill="#6cc04a"/></svg>
<div style="left:531px;top:41.66px;font-size:8.2px;line-height:8.2px;color:#bbbbbb;font-weight:normal;font-family:'Liberation Sans',sans-serif;transform-origin:0 0;transform:scaleX(0.8707);">Matrices.java</div>
<svg style="left:579px;top:41px" width="5" height="5" viewBox="0 0 5 5"><path d="M0.3 0.3L4.7 4.7M4.7 0.3L0.3 4.7" stroke="#6e6e6e" stroke-width="0.8"/></svg>
<svg style="left:595px;top:39.5px" width="7" height="9" viewBox="0 0 7 9"><path d="M0 0H5L7 2V9H0Z" fill="#9ea7ad"/><path d="M1.5 3H5.5M1.5 4.8H5.5M1.5 6.6H5.5" stroke="#3c3f41" stroke-width="0.7"/></svg>
<div style="left:605px;top:41.66px;font-size:8.2px;line-height:8.2px;color:#bbbbbb;font-weight:normal;font-family:'Liberation Sans',sans-serif;transform-origin:0 0;transform:scaleX(0.8303);">exercises2</div>
<svg style="left:644px;top:41px" width="5" height="5" viewBox="0 0 5 5"><path d="M0.3 0.3L4.7 4.7M4.7 0.3L0.3 4.7" stroke="#6e6e6e" stroke-width="0.8"/></svg>
<svg style="left:658px;top:39.5px" width="9" height="9" viewBox="0 0 10 10"><circle cx="4.8" cy="5.3" r="4.6" fill="#44a0cf"/><path d="M6.6 3.8A2.2 2.2 0 1 0 6.6 6.8" stroke="#1d4f6b" stroke-width="1.2" fill="none"/><circle cx="8.1" cy="1.9" r="1.9" fill="#6cc04a"/></svg>
<div style="left:669.5px;top:41.66px;font-size:8.2px;line-height:8.2px;color:#bbbbbb;font-weight:normal;font-family:'Liberation Sans',sans-serif;transform-origin:0 0;transform:scaleX(0.8538);">Ex5GameOfLife.java</div>
<svg style="left:740px;top:41px" width="5" height="5" viewBox="0 0 5 5"><path d="M0.3 0.3L4.7 4.7M4.7 0.3L0.3 4.7" stroke="#6e6e6e" stroke-width="0.8"/></svg>
<div style="left:206.5px;top:52px;width:580px;height:0.8px;background:#323232;"></div>
<div style="left:786px;top:36px;width:14px;height:362.5px;background:#3c3f41;"></div>
<div style="left:786px;top:36px;width:0.8px;height:362.5px;background:#323232;"></div>
<div style="left:789px;top:43.5px;width:7px;height:7px;background:linear-gradient(135deg,#e05555 0 50%,#5a8fd8 50% 100%);border:0.5px solid #ddd;box-sizing:border-box"></div>
<div style="left:789px;top:115px;width:7px;height:7px;background:linear-gradient(135deg,#e05555 0 50%,#5a8fd8 50% 100%);border:0.5px solid #ddd;box-sizing:border-box"></div>
<div style="left:797.5px;top:52.7px;transform-origin:0 0;transform:rotate(90deg) scaleX(0.8848);font-size:7.5px;line-height:7.5px;color:#bbbbbb;font-family:'Liberation Sans',sans-serif">UML Generator</div>
<div style="left:797.5px;top:123.4px;transform-origin:0 0;transform:rotate(90deg) scaleX(0.9072);font-size:7.5px;line-height:7.5px;color:#bbbbbb;font-family:'Liberation Sans',sans-serif">UML design tool window</div>
<svg style="left:791px;top:211px" width="7" height="8" viewBox="0 0 7 8"><ellipse cx="3.5" cy="5" rx="2.5" ry="3" fill="#afb1b3"/><circle cx="3.5" cy="1.5" r="1.3" fill="#afb1b3"/></svg>
<div style="left:797.5px;top:222px;transform-origin:0 0;transform:rotate(90deg) scaleX(0.8877);font-size:7.5px;line-height:7.5px;color:#bbbbbb;font-family:'Liberation Sans',sans-serif">Ant</div>
<div style="left:13.8px;top:284.5px;width:772px;height:1px;background:#2b2b2b;"></div>
<div style="left:13.8px;top:285.5px;width:772px;height:15px;background:#3c3f41;"></div>
<div style="left:17px;top:290.66px;font-size:8.2px;line-height:8.2px;color:#bbbbbb;font-weight:normal;font-family:'Liberation Sans',sans-serif;transform-origin:0 0;transform:scaleX(0.8672);">Run:</div>
<svg style="left:44px;top:288px" width="9" height="9" viewBox="0 0 9 9"><rect x="0" y="0" width="9" height="9" fill="#6d7376"/><rect x="1.2" y="2.5" width="6.6" height="5.3" fill="#3e4a4f"/></svg>
<div style="left:56px;top:290.66px;font-size:8.2px;line-height:8.2px;color:#bbbbbb;font-weight:normal;font-family:'Liberation Sans',sans-serif;transform-origin:0 0;transform:scaleX(0.8995);">Ex3MatrixMethods</div>
<svg style="left:122px;top:290.5px" width="5" height="5" viewBox="0 0 5 5"><path d="M0.3 0.3L4.7 4.7M4.7 0.3L0.3 4.7" stroke="#6e6e6e" stroke-width="0.8"/></svg>
<div style="left:36.2px;top:299.4px;width:97.7px;height:1.8px;background:#8f9194;"></div>
<svg style="left:757.5px;top:288px" width="9" height="9" viewBox="0 0 9 9"><polygon points="3.61,1.63 3.61,0.09 5.39,0.09 5.39,1.63 6.54,2.30 7.87,1.52 8.77,3.07 7.43,3.83 7.43,5.17 8.77,5.93 7.87,7.48 6.54,6.70 5.39,7.37 5.39,8.91 3.61,8.91 3.61,7.37 2.46,6.70 1.13,7.48 0.23,5.93 1.57,5.17 1.57,3.83 0.23,3.07 1.13,1.52 2.46,2.30" fill="#afb1b3"/><circle cx="4.5" cy="4.5" r="3.2" fill="#afb1b3"/><circle cx="4.5" cy="4.5" r="1.3" fill="#3c3f41"/></svg>
<div style="left:774.7px;top:292.5px;width:7.5px;height:1px;background:#afb1b3;"></div>
<div style="left:13.8px;top:301px;width:36px;height:97.5px;background:#3c3f41;"></div>
<div style="left:50px;top:301px;width:736px;height:97.5px;background:#2b2b2b;"></div>
<div style="left:56.7px;top:300.02px;font-size:8.33px;line-height:8.33px;color:#bbbbbb;font-weight:normal;font-family:'Liberation Mono',monospace;">2</div>
<div style="left:56.7px;top:313.17px;font-size:8.33px;line-height:8.33px;color:#bbbbbb;font-weight:normal;font-family:'Liberation Mono',monospace;">3</div>
<div style="left:56.7px;top:326.32px;font-size:8.33px;line-height:8.33px;color:#bbbbbb;font-weight:normal;font-family:'Liberation Mono',monospace;">1</div>
<div style="left:56.7px;top:339.47px;font-size:8.33px;line-height:8.33px;color:#bbbbbb;font-weight:normal;font-family:'Liberation Mono',monospace;">2</div>
<div style="left:56.7px;top:352.62px;font-size:8.33px;line-height:8.33px;color:#bbbbbb;font-weight:normal;font-family:'Liberation Mono',monospace;">3</div>
<div style="left:56.7px;top:365.77px;font-size:8.33px;line-height:8.33px;color:#bbbbbb;font-weight:normal;font-family:'Liberation Mono',monospace;">1</div>
<div style="left:56.7px;top:378.92px;font-size:8.33px;line-height:8.33px;color:#bbbbbb;font-weight:normal;font-family:'Liberation Mono',monospace;">2</div>
<div style="left:56.7px;top:392.07px;font-size:8.33px;line-height:8.33px;color:#bbbbbb;font-weight:normal;font-family:'Liberation Mono',monospace;">3</div>
<svg style="left:19px;top:306.5px" width="7.5" height="8.5" viewBox="0 0 7 8"><path d="M0 0L7 4L0 8Z" fill="#4fa65a"/></svg>
<div style="left:19.5px;top:323px;width:6.5px;height:6.2px;background:#5a5d5f;"></div>
<svg style="left:18.5px;top:338.5px" width="9" height="8" viewBox="0 0 9 8"><path d="M0.5 2H2.5L3.5 0.8H5.5L6.5 2H8.5V7.5H0.5Z" fill="none" stroke="#606366" stroke-width="0.9"/><circle cx="4.5" cy="4.6" r="1.5" fill="none" stroke="#606366" stroke-width="0.9"/></svg>
<svg style="left:18.5px;top:354.5px" width="9" height="8.5" viewBox="0 0 9 9"><path d="M1 8.5V5L4.5 1.5L8 5V8.5M3 8.5V6H6V8.5" fill="none" stroke="#606366" stroke-width="1"/></svg>
<svg style="left:18.5px;top:370.5px" width="9" height="9" viewBox="0 0 9 9"><path d="M3 0.5H8.5V8.5H3M0.5 4.5H5.5M3.5 2.5L5.5 4.5L3.5 6.5" fill="none" stroke="#606366" stroke-width="0.9"/></svg>
<div style="left:14px;top:385.5px;width:15px;height:0.7px;background:#4a4d4f;"></div>
<svg style="left:37.5px;top:306.5px" width="7" height="8.5" viewBox="0 0 7 9"><path d="M3.5 0.5V8.5M0.5 3.5L3.5 0.5L6.5 3.5" fill="none" stroke="#5a5d5f" stroke-width="0.9"/></svg>
<svg style="left:37.5px;top:322.5px" width="7" height="8.5" viewBox="0 0 7 9"><path d="M3.5 0.5V8.5M0.5 5.5L3.5 8.5L6.5 5.5" fill="none" stroke="#5a5d5f" stroke-width="0.9"/></svg>
<svg style="left:36.5px;top:338.5px" width="9" height="8.5" viewBox="0 0 9 9"><path d="M0.5 1H8.5M0.5 4H7A1.8 1.8 0 0 1 7 7.6H4M5.5 6L4 7.6L5.5 9M0.5 7.6H2" fill="none" stroke="#c0c2c4" stroke-width="1"/></svg>
<div style="left:33px;top:352.4px;width:14.5px;height:12.3px;background:#4c5052;"></div>
<svg style="left:36px;top:354px" width="9" height="9" viewBox="0 0 9 9"><path d="M0.5 1H4M0.5 4H4M0.5 7H4M6.5 0.5V6M5 4.5L6.5 6L8 4.5M0.5 8.5H8.5" fill="none" stroke="#c0c2c4" stroke-width="1"/></svg>
<svg style="left:36.5px;top:371px" width="9" height="10" viewBox="0 0 9 10"><rect x="2" y="0.5" width="5" height="3" fill="#c0c2c4"/><rect x="0.5" y="3.5" width="8" height="4" fill="#c0c2c4"/><rect x="2" y="6.5" width="5" height="3" fill="#c0c2c4"/><rect x="2.8" y="7.5" width="3.4" height="0.8" fill="#3c3f41"/></svg>
<svg style="left:21.5px;top:391px" width="5" height="4" viewBox="0 0 5 4"><path d="M0.5 0.5L2 2L0.5 3.5M2.8 0.5L4.3 2L2.8 3.5" fill="none" stroke="#8c8c8c" stroke-width="0.8"/></svg>
<svg style="left:38.5px;top:391px" width="5" height="4" viewBox="0 0 5 4"><path d="M0.5 0.5L2 2L0.5 3.5M2.8 0.5L4.3 2L2.8 3.5" fill="none" stroke="#8c8c8c" stroke-width="0.8"/></svg>
<div style="left:781px;top:381px;width:5px;height:17px;background:#535557;"></div>
<div style="left:13.8px;top:398.5px;width:772px;height:14px;background:#3c3f41;"></div>
<div style="left:13.8px;top:398.5px;width:772px;height:0.5px;background:#333537;"></div>
<div style="left:13.8px;top:398.8px;width:38.5px;height:13.7px;background:#2d2f31;"></div>
<svg style="left:20px;top:402px" width="5" height="7" viewBox="0 0 5 7"><path d="M0 0L5 3.5L0 7Z" fill="#afb1b3"/></svg>
<div style="left:29.5px;top:403.86px;font-size:8.2px;line-height:8.2px;color:#bbbbbb;font-weight:normal;font-family:'Liberation Sans',sans-serif;transform-origin:0 0;transform:scaleX(0.7876);"><span style="text-decoration:underline;text-decoration-thickness:0.7px;text-underline-offset:1px">4</span>: Run</div>
<svg style="left:61px;top:401.5px" width="7" height="7" viewBox="0 0 7 7"><path d="M0 0.5H7M0 2.5H7M0 4.5H7M0 6.5H7" stroke="#afb1b3" stroke-width="0.9"/></svg>
<div style="left:70.6px;top:403.86px;font-size:8.2px;line-height:8.2px;color:#bbbbbb;font-weight:normal;font-family:'Liberation Sans',sans-serif;transform-origin:0 0;transform:scaleX(0.7740);">TODO</div>
<svg style="left:103px;top:401.5px" width="7" height="7" viewBox="0 0 7 7"><circle cx="3.5" cy="3.5" r="3.3" fill="#afb1b3"/><path d="M3.5 1.3V4.2M3.5 5V5.8" stroke="#3c3f41" stroke-width="1"/></svg>
<div style="left:112.2px;top:403.86px;font-size:8.2px;line-height:8.2px;color:#bbbbbb;font-weight:normal;font-family:'Liberation Sans',sans-serif;transform-origin:0 0;transform:scaleX(0.7783);"><span style="text-decoration:underline;text-decoration-thickness:0.7px;text-underline-offset:1px">6</span>: Problems</div>
<svg style="left:160.5px;top:400.8px" width="7" height="8" viewBox="0 0 8 9"><path d="M2.2 1L3 2.3M5.8 1L5 2.3" stroke="#afb1b3" stroke-width="0.8"/><rect x="1.5" y="2.2" width="5" height="6.3" rx="2" fill="#afb1b3"/><path d="M0 4.2H1.5M6.5 4.2H8M0 6.8H1.5M6.5 6.8H8" stroke="#afb1b3" stroke-width="0.8"/><path d="M4 3.5V8" stroke="#3c3f41" stroke-width="0.6"/></svg>
<div style="left:170px;top:403.86px;font-size:8.2px;line-height:8.2px;color:#bbbbbb;font-weight:normal;font-family:'Liberation Sans',sans-serif;transform-origin:0 0;transform:scaleX(0.7733);"><span style="text-decoration:underline;text-decoration-thickness:0.7px;text-underline-offset:1px">5</span>: Debug</div>
<svg style="left:208px;top:401.5px" width="8" height="7" viewBox="0 0 8 7"><rect x="0.5" y="0.5" width="7" height="6" fill="#afb1b3"/><path d="M1.5 2L3 3.3L1.5 4.6" stroke="#3c3f41" stroke-width="0.8" fill="none"/></svg>
<div style="left:218.4px;top:403.86px;font-size:8.2px;line-height:8.2px;color:#bbbbbb;font-weight:normal;font-family:'Liberation Sans',sans-serif;transform-origin:0 0;transform:scaleX(0.8174);">Terminal</div>
<svg style="left:255.5px;top:400.5px" width="9" height="9" viewBox="0 0 9 9"><path d="M0.3 2.8L3.2 0.3L5.6 2.6L2.7 5.2Z" fill="#afb1b3"/><path d="M4 4L8.3 8.5" stroke="#afb1b3" stroke-width="1.6"/></svg>
<div style="left:267.5px;top:403.86px;font-size:8.2px;line-height:8.2px;color:#bbbbbb;font-weight:normal;font-family:'Liberation Sans',sans-serif;transform-origin:0 0;transform:scaleX(0.7849);">Build</div>
<svg style="left:742px;top:401.5px" width="8" height="8" viewBox="0 0 8 8"><circle cx="4" cy="3.8" r="3.2" stroke="#afb1b3" stroke-width="0.9" fill="none"/><path d="M5.5 6L7.5 7.8" stroke="#afb1b3" stroke-width="0.9"/></svg>
<div style="left:752.6px;top:403.86px;font-size:8.2px;line-height:8.2px;color:#bbbbbb;font-weight:normal;font-family:'Liberation Sans',sans-serif;transform-origin:0 0;transform:scaleX(0.7783);">Event Log</div>
<div style="left:0px;top:412.5px;width:800px;height:12px;background:#3c3f41;"></div>
<div style="left:4px;top:415px;width:7px;height:7px;border:1px solid #8c8c8c;box-sizing:border-box"></div>
<div style="left:17px;top:416.56px;font-size:8.2px;line-height:8.2px;color:#999999;font-weight:normal;font-family:'Liberation Sans',sans-serif;transform-origin:0 0;transform:scaleX(0.9037);">Build completed successfully in 2 s 22 ms (3 minutes ago)</div>
<div style="left:577.2px;top:416.56px;font-size:8.2px;line-height:8.2px;color:#999999;font-weight:normal;font-family:'Liberation Sans',sans-serif;transform-origin:0 0;transform:scaleX(0.8799);">552 chars, 17 line breaks</div>
<div style="left:668.6px;top:416.56px;font-size:8.2px;line-height:8.2px;color:#999999;font-weight:normal;font-family:'Liberation Sans',sans-serif;transform-origin:0 0;transform:scaleX(0.8949);">114:2</div>
<div style="left:693.6px;top:416.56px;font-size:8.2px;line-height:8.2px;color:#999999;font-weight:normal;font-family:'Liberation Sans',sans-serif;transform-origin:0 0;transform:scaleX(0.6693);">LF</div>
<div style="left:708.6px;top:416.56px;font-size:8.2px;line-height:8.2px;color:#999999;font-weight:normal;font-family:'Liberation Sans',sans-serif;transform-origin:0 0;transform:scaleX(0.8404);">UTF-8</div>
<div style="left:735.3px;top:416.56px;font-size:8.2px;line-height:8.2px;color:#999999;font-weight:normal;font-family:'Liberation Sans',sans-serif;transform-origin:0 0;transform:scaleX(0.8511);">4 spaces</div>
<svg style="left:770px;top:415px" width="8" height="8" viewBox="0 0 8 8"><rect x="0.5" y="3.5" width="5" height="4" fill="#999999"/><path d="M4 3.5V2A1.8 1.8 0 0 1 7.5 2V3" stroke="#999999" stroke-width="0.9" fill="none"/></svg>
<div style="left:788px;top:416px;width:6px;height:6px;border-radius:50%;background:#555"></div>
<div style="left:0px;top:424.5px;width:800px;height:25.5px;background:#1d1e21;"></div>
<div style="left:10px;top:432px;width:4.7px;height:4.7px;background:#ffffff;"></div>
<div style="left:15.5px;top:432px;width:4.7px;height:4.7px;background:#ffffff;"></div>
<div style="left:10px;top:437.5px;width:4.7px;height:4.7px;background:#ffffff;"></div>
<div style="left:15.5px;top:437.5px;width:4.7px;height:4.7px;background:#ffffff;"></div>
<div style="left:30px;top:424.5px;width:214.7px;height:25.5px;background:#f2f2f2;"></div>
<svg style="left:38px;top:432px" width="10" height="10" viewBox="0 0 10 10"><circle cx="6" cy="4" r="3.2" stroke="#222" stroke-width="0.9" fill="none"/><path d="M3.7 6.3L0.5 9.5" stroke="#222" stroke-width="1"/></svg>
<div style="left:55px;top:434.97px;font-size:9.6px;line-height:9.6px;color:#1e1e1e;font-weight:normal;font-family:'Liberation Sans',sans-serif;transform-origin:0 0;transform:scaleX(0.9831);">Skriv här för att söka</div>
<svg style="left:254.3px;top:432.8px" width="11.5" height="9.5" viewBox="0 0 11.5 9.5"><rect x="2.6" y="1.2" width="6.3" height="7.1" fill="none" stroke="#d8d8d8" stroke-width="0.9"/><path d="M0.5 0.3V9.2M11 0.3V9.2M0.5 0.5H2M0.5 9H2M9.5 0.5H11M9.5 9H11" stroke="#d8d8d8" stroke-width="0.9"/></svg>
<svg style="left:284.4px;top:431.5px" width="16" height="12.5" viewBox="0 0 16 12.5"><rect x="0" y="0" width="16" height="12.5" fill="#1a7fd0"/><path d="M0 0L8 6.5L16 0Z" fill="#5ab8f0"/><path d="M0 12.5L8 6.5L16 12.5" fill="none" stroke="#3aa0e6" stroke-width="0.8"/></svg>
<svg style="left:316px;top:430px" width="15" height="15" viewBox="0 0 16 16"><circle cx="8" cy="8" r="7.5" fill="#db4437"/><path d="M8 8L1.5 4.25A7.5 7.5 0 0 0 8 15.5Z" fill="#0f9d58"/><path d="M8 8L8 15.5A7.5 7.5 0 0 0 14.5 4.25Z" fill="#f4b400"/><circle cx="8" cy="8" r="3.6" fill="#fff"/><circle cx="8" cy="8" r="2.8" fill="#4285f4"/></svg>
<div style="left:311px;top:448.3px;width:25px;height:1.7px;background:#9fb4c6;"></div>
<svg style="left:346px;top:430px" width="16" height="15" viewBox="0 0 16 15"><path d="M5 4V2.5A3 2 0 0 1 11 2.5V4" stroke="#eeeeee" stroke-width="1" fill="none"/><rect x="0.5" y="4" width="15" height="11" fill="#eeeeee"/><rect x="5" y="6.5" width="2.7" height="2.7" fill="#f25022"/><rect x="8.3" y="6.5" width="2.7" height="2.7" fill="#7fba00"/><rect x="5" y="9.8" width="2.7" height="2.7" fill="#00a4ef"/><rect x="8.3" y="9.8" width="2.7" height="2.7" fill="#ffb900"/></svg>
<div style="left:378px;top:430.5px;width:15px;height:14px;background:#1f98d8;"></div>
<div style="left:384px;top:433.5px;width:1.8px;height:8.5px;background:#ffffff;"></div>
<div style="left:384px;top:440.3px;width:5.8px;height:1.7px;background:#ffffff;"></div>
<svg style="left:411px;top:431px" width="12.5" height="14" viewBox="0 0 12.5 14"><circle cx="6.25" cy="8" r="5.6" fill="#f0612b"/><circle cx="6.25" cy="8" r="2.1" fill="#1d1e21"/><path d="M6.5 0.3Q10 1.5 9.5 3.5L6 3Z" fill="#f0612b"/></svg>
<div style="left:404px;top:448.3px;width:26px;height:1.7px;background:#9fb4c6;"></div>
<div style="left:434px;top:424.5px;width:30px;height:25.5px;background:#3a3a3a;"></div>
<svg style="left:442px;top:432px" width="12.5" height="11" viewBox="0 0 10 10" preserveAspectRatio="none"><rect width="10" height="10" fill="url(#ijg)"/><rect x="1.3" y="1.4" width="7.6" height="7.3" fill="#000"/><path d="M2.5 2.3H3.3V5M4 2.3H5.3V4.6Q5.3 5.3 4.4 5.3" stroke="#fff" stroke-width="0.8" fill="none"/><rect x="2.3" y="6.8" width="2.6" height="0.7" fill="#fff"/></svg>
<div style="left:434px;top:448.3px;width:30px;height:1.7px;background:#9fb4c6;"></div>
<svg style="left:648px;top:434px" width="8" height="5" viewBox="0 0 8 5"><path d="M0.5 4.5L4 1L7.5 4.5" stroke="#dddddd" stroke-width="0.9" fill="none"/></svg>
<svg style="left:664px;top:432px" width="9" height="10" viewBox="0 0 9 10"><rect x="1.5" y="2" width="4.5" height="6" stroke="#dddddd" stroke-width="0.8" fill="none"/><path d="M6 4L8.5 3V7L6 6" stroke="#dddddd" stroke-width="0.8" fill="none"/></svg>
<svg style="left:677px;top:433px" width="11" height="9" viewBox="0 0 11 9"><ellipse cx="5" cy="5" rx="4.5" ry="3.2" fill="#cccccc"/><circle cx="8" cy="6.5" r="2.4" fill="#888888"/></svg>
<svg style="left:692px;top:433px" width="11" height="9" viewBox="0 0 11 9"><rect x="0.5" y="1" width="9" height="5.5" stroke="#dddddd" stroke-width="0.9" fill="none"/><rect x="1.5" y="2" width="5" height="3.5" fill="#dddddd"/><circle cx="8.5" cy="6.8" r="2" fill="#3cc15a"/></svg>
<svg style="left:707px;top:432px" width="10" height="10" viewBox="0 0 10 10"><path d="M0.5 3.5H2.5L5 1V9L2.5 6.5H0.5Z" stroke="#dddddd" stroke-width="0.8" fill="none"/><path d="M6.8 3.3A2.5 2.5 0 0 1 6.8 6.7M8.2 2A4.3 4.3 0 0 1 8.2 8" stroke="#dddddd" stroke-width="0.7" fill="none"/></svg>
<div style="left:734px;top:429.70px;font-size:7.8px;line-height:7.8px;color:#ffffff;font-weight:normal;font-family:'Liberation Sans',sans-serif;">22:23</div>
<div style="left:723px;top:440.70px;font-size:7.8px;line-height:7.8px;color:#ffffff;font-weight:normal;font-family:'Liberation Sans',sans-serif;">2020-12-08</div>
<svg style="left:774px;top:430px" width="16" height="16" viewBox="0 0 16 16"><path d="M1 1H12V9H6L3 12V9H1Z" fill="#eeeeee"/><path d="M3 3.5H10M3 5.5H10M3 7.3H8" stroke="#1f1f1f" stroke-width="0.8"/><circle cx="11" cy="11.5" r="3.8" fill="#1f1f1f" stroke="#dddddd" stroke-width="0.8"/><path d="M11 9.5V13.5" stroke="#eeeeee" stroke-width="0.9"/></svg>
<div style="left:796px;top:424.5px;width:0.8px;height:25.5px;background:#555555;"></div>
</body></html>
